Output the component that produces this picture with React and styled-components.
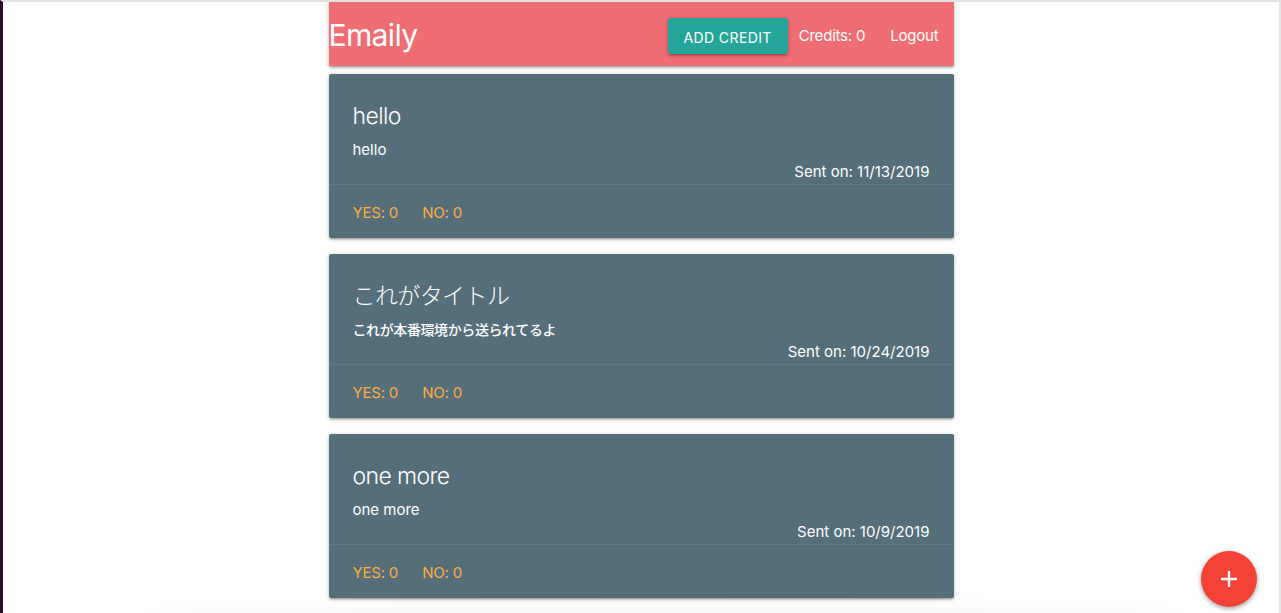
import React from 'react'
import styled, { createGlobalStyle } from 'styled-components'

const GlobalStyle = createGlobalStyle`
  html, body {
    margin: 0;
    padding: 0;
    background: #fff;
    font-family: Inter, "Noto Sans CJK JP", sans-serif;
    font-size: 15px;
    color: #fff;
  }
`

const depth1 = `
  box-shadow: 0 2px 2px 0 rgba(0,0,0,.14), 0 3px 1px -2px rgba(0,0,0,.12), 0 1px 5px 0 rgba(0,0,0,.2);
`

const Frame = styled.div`
  min-height: 100vh;
  box-sizing: border-box;
  border-top: 2px solid #e2e2e2;
  border-left: 3px solid #2a0c27;
  border-right: 2px solid #e4e4e4;
  overflow: hidden;
`

const Container = styled.div`
  width: 625px;
  margin: 0 auto;
`

const Nav = styled.nav`
  height: 64px;
  padding-top: 2px;
  box-sizing: border-box;
  background: #ef6e73;
  display: flex;
  align-items: center;
  justify-content: space-between;
  ${depth1}
`

const Brand = styled.a`
  font-size: 30px;
  color: #fff;
  text-decoration: none;
  letter-spacing: -0.6px;
`

const NavList = styled.ul`
  list-style: none;
  margin: 0;
  padding: 0;
  display: flex;
  align-items: center;
  height: 100%;
`

const NavItem = styled.li`
  margin: ${p => p.margin || '0'};
  padding: ${p => p.padding || '0'};
  font-size: 15px;
  letter-spacing: -0.2px;
`

const CreditButton = styled.button`
  height: 36px;
  width: 120px;
  margin: 2px 1px 0 0;
  border: none;
  border-radius: 2px;
  background: #26a69a;
  color: #fff;
  font-family: inherit;
  font-size: 14px;
  letter-spacing: 0.4px;
  text-transform: uppercase;
  padding: 2px 0 0;
  cursor: pointer;
  ${depth1}
`

const Card = styled.div`
  background: #546e7a;
  margin: 8px 0 16px;
  border-radius: 2px;
  ${depth1}
`

const CardContent = styled.div`
  padding: 26px 24px 1px;
  display: flex;
  flex-direction: column;
`

const CardTitle = styled.span`
  font-size: 23px;
  line-height: 32px;
  font-weight: 300;
  letter-spacing: -0.6px;
  margin-bottom: 7px;
`

const Body = styled.p`
  margin: 0;
  line-height: 22px;
  font-size: ${p => (p.cjk ? '14px' : '15px')};
  letter-spacing: ${p => (p.cjk ? '-0.4px' : '0')};
  font-weight: ${p => (p.cjk ? 500 : 400)};
`

const SentOn = styled.p`
  margin: 0;
  line-height: 22px;
  align-self: flex-end;
`

const CardAction = styled.div`
  border-top: 1px solid rgba(160, 160, 160, 0.2);
  padding: 17px 24px 15px;
  height: 21px;
  display: flex;
  gap: 24px;
  align-items: center;
`

const Vote = styled.a`
  color: #ffab40;
  text-transform: uppercase;
  font-size: 15px;
  letter-spacing: -0.2px;
`

const Fab = styled.button`
  position: fixed;
  right: 24px;
  bottom: 6px;
  width: 56px;
  height: 56px;
  border-radius: 50%;
  border: none;
  background: #f44336;
  display: flex;
  align-items: center;
  justify-content: center;
  cursor: pointer;
  box-shadow: 0 2px 4px rgba(0,0,0,.25), 0 1px 6px rgba(0,0,0,.15);
`

const BottomShade = styled.div`
  position: fixed;
  left: 140px;
  right: 90px;
  bottom: -30px;
  height: 30px;
  border-radius: 50%;
  box-shadow: 0 -2px 22px rgba(0,0,0,.05);
  pointer-events: none;
`

const surveys = [
  { title: 'hello', body: 'hello', date: '11/13/2019' },
  { title: 'これがタイトル', body: 'これが本番環境から送られてるよ', date: '10/24/2019', cjk: true },
  { title: 'one more', body: 'one more', date: '10/9/2019' }
]

const SurveyCard = ({ survey }) => (
  <Card>
    <CardContent>
      <CardTitle>{survey.title}</CardTitle>
      <Body cjk={survey.cjk}>{survey.body}</Body>
      <SentOn>Sent on: {survey.date}</SentOn>
    </CardContent>
    <CardAction>
      <Vote>Yes: 0</Vote>
      <Vote>No: 0</Vote>
    </CardAction>
  </Card>
)

export default function App () {
  return <>
    <GlobalStyle />
    <Frame>
      <Container>
        <Nav>
          <Brand>Emaily</Brand>
          <NavList>
            <NavItem><CreditButton>Add Credit</CreditButton></NavItem>
            <NavItem margin='0 10px'>Credits: 0</NavItem>
            <NavItem padding='0 15px'>Logout</NavItem>
          </NavList>
        </Nav>
        {surveys.map(s => <SurveyCard key={s.date} survey={s} />)}
      </Container>
    </Frame>
    <BottomShade />
    <Fab>
      <svg width='18' height='18' viewBox='0 0 18 18'>
        <path d='M9 1v16M1 9h16' stroke='#fff' strokeWidth='2.4' />
      </svg>
    </Fab>
  </>
}
